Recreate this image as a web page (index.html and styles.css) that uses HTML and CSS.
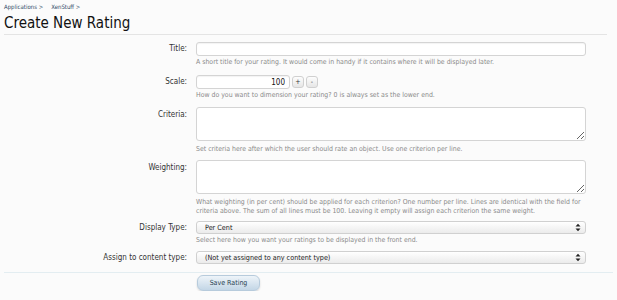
FILE: index.html
```html
<!DOCTYPE html>
<html>
<head>
<meta charset="utf-8">
<link rel="stylesheet" href="styles.css">
</head>
<body>
<div class="page">
  <div class="crumbs"><span>Applications &gt;</span><span>XenStuff &gt;</span></div>
  <h1 class="title">Create New Rating</h1>
  <form class="form">
    <div class="row r-title">
      <label class="label">Title:</label>
      <div class="ctrl">
        <input class="text" type="text">
        <p class="hint">A short title for your rating. It would come in handy if it contains where it will be displayed later.</p>
      </div>
    </div>
    <div class="row r-scale">
      <label class="label">Scale:</label>
      <div class="ctrl">
        <div class="spin">
          <input class="text num" type="text" value="100">
          <span class="sbtn">+</span>
          <span class="sbtn">-</span>
        </div>
        <p class="hint">How do you want to dimension your rating? 0 is always set as the lower end.</p>
      </div>
    </div>
    <div class="row r-crit">
      <label class="label lbl-area">Criteria:</label>
      <div class="ctrl">
        <textarea class="area"></textarea>
        <p class="hint">Set criteria here after which the user should rate an object. Use one criterion per line.</p>
      </div>
    </div>
    <div class="row r-weight">
      <label class="label lbl-area">Weighting:</label>
      <div class="ctrl">
        <textarea class="area"></textarea>
        <p class="hint">What weighting (in per cent) should be applied for each criterion? One number per line. Lines are identical with the field for<br>criteria above. The sum of all lines must be 100. Leaving it empty will assign each criterion the same weight.</p>
      </div>
    </div>
    <div class="row r-disp">
      <label class="label">Display Type:</label>
      <div class="ctrl">
        <div class="select"><span>Per Cent</span><svg class="arr" width="6" height="9" viewBox="0 0 6 9"><path d="M0.5 3.5 L3 0.8 L5.5 3.5 Z M0.5 5.5 L3 8.2 L5.5 5.5 Z" fill="#222"/></svg></div>
        <p class="hint">Select here how you want your ratings to be displayed in the front end.</p>
      </div>
    </div>
    <div class="row r-assign">
      <label class="label">Assign to content type:</label>
      <div class="ctrl">
        <div class="select"><span>(Not yet assigned to any content type)</span><svg class="arr" width="6" height="9" viewBox="0 0 6 9"><path d="M0.5 3.5 L3 0.8 L5.5 3.5 Z M0.5 5.5 L3 8.2 L5.5 5.5 Z" fill="#222"/></svg></div>
      </div>
    </div>
    <div class="submit">
      <span class="save">Save Rating</span>
    </div>
  </form>
</div>
</body>
</html>
```
FILE: styles.css
```css
html, body {
  margin: 0;
  padding: 0;
  background: #fbfbfb;
}
body {
  font-family: "DejaVu Sans Condensed", "DejaVu Sans", sans-serif;
  color: #222;
}
.page {
  padding: 3px 10px 0 4px;
}
.crumbs {
  display: flex;
  gap: 8px;
  font-size: 6px;
  line-height: 7px;
  color: #2f4a66;
  height: 7px;
}
.title {
  margin: 4px 0 0 0;
  font-size: 15px;
  line-height: 19px;
  font-weight: normal;
  color: #111;
  padding-bottom: 1px;
  border-bottom: 1px solid #e4e4e4;
}
.form {
  display: flex;
  flex-direction: column;
  padding-top: 7px;
}
.row {
  display: grid;
  grid-template-columns: 183px 390px;
  column-gap: 9px;
}
.label {
  text-align: right;
  font-size: 8px;
  line-height: 14px;
  color: #333;
}
.lbl-area {
  line-height: 16px;
}
.ctrl {
  display: flex;
  flex-direction: column;
}
.text {
  box-sizing: border-box;
  height: 14px;
  width: 390px;
  margin: 0;
  border: 1px solid #d4d4d4;
  border-radius: 3px;
  background: #fff;
  box-shadow: inset 0 1px 1px rgba(0,0,0,0.05);
  font-family: inherit;
  font-size: 8px;
  padding: 0 4px;
}
.spin {
  display: flex;
  align-items: center;
  gap: 2px;
}
.text.num {
  width: 94px;
  text-align: right;
  color: #111;
}
.sbtn {
  box-sizing: border-box;
  width: 12px;
  height: 12px;
  border: 1px solid #d0d0d0;
  border-radius: 3px;
  background: linear-gradient(#fdfdfd, #e6e6e6);
  font-size: 7px;
  line-height: 10px;
  text-align: center;
  color: #333;
}
.hint {
  margin: 2px 0 0 0;
  font-size: 6.9px;
  line-height: 9px;
  color: #8a8a8a;
  white-space: nowrap;
}
.area {
  box-sizing: border-box;
  width: 390px;
  height: 34px;
  margin: 0;
  border: 1px solid #d4d4d4;
  border-radius: 3px;
  background: #fff;
  display: block;
}
.r-title { margin-bottom: 8px; }
.r-scale { margin-bottom: 7px; }
.r-crit { margin-bottom: 6px; }
.r-crit .hint { margin-top: 4px; }
.r-weight .hint { margin-top: 4px; }
.r-weight { margin-bottom: 5px; }
.r-disp { margin-bottom: 6px; }
.select {
  box-sizing: border-box;
  width: 390px;
  height: 13px;
  border: 1px solid #d0d0d0;
  border-radius: 3px;
  background: linear-gradient(#ffffff, #ebebeb);
  display: flex;
  align-items: center;
  justify-content: space-between;
  padding: 0 4px 0 8px;
  font-size: 7.2px;
  color: #222;
}
.arr {
  display: block;
}
.submit {
  display: flex;
  margin-top: 7px;
  margin-right: -6px;
  border-top: 1px solid #e3edf1;
  padding: 2px 0 0 193px;
}
.save {
  display: block;
  box-sizing: border-box;
  width: 63px;
  height: 16px;
  border-radius: 6px;
  border: 1px solid #b7cbdc;
  background: linear-gradient(#eef4f9, #c3d6e6);
  box-shadow: 0 1px 2px rgba(0,0,0,0.15);
  text-align: center;
  font-size: 7px;
  line-height: 14px;
  color: #2a3f52;
}
```
